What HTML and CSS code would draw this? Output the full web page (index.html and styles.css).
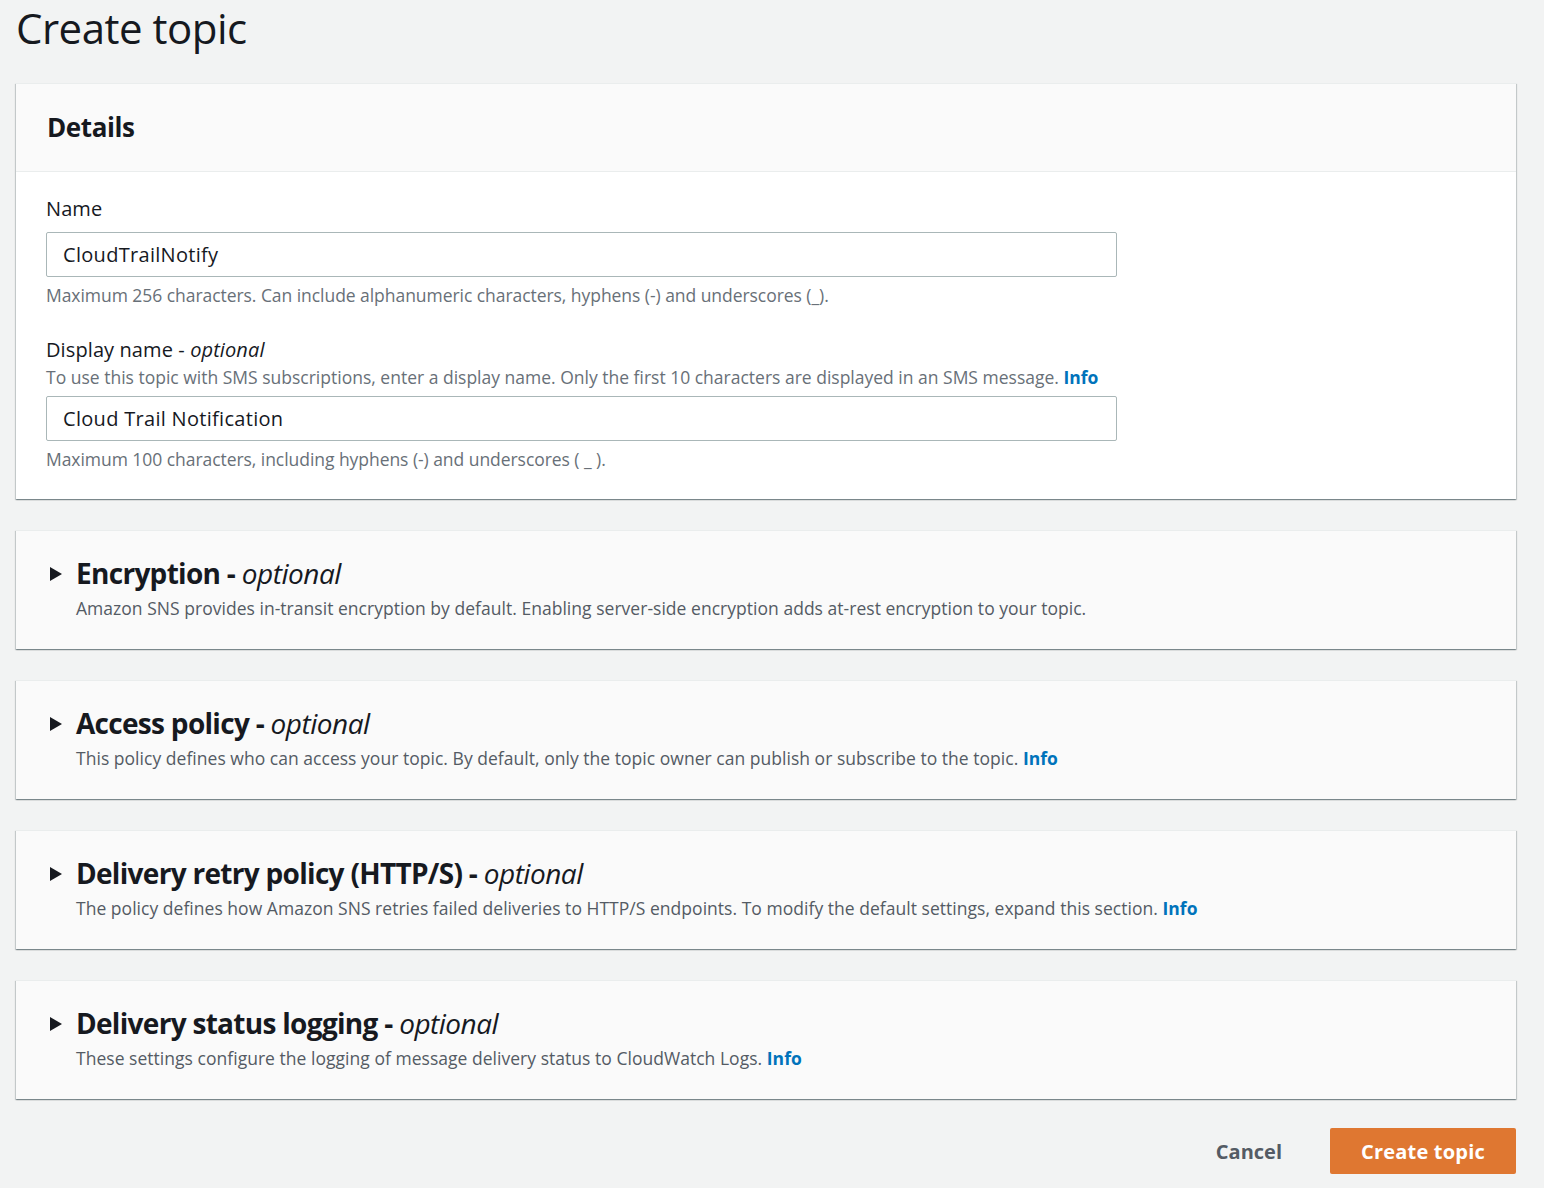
FILE: index.html
```html
<!DOCTYPE html>
<html>
<head>
<meta charset="utf-8">
<link rel="stylesheet" href="styles.css">
</head>
<body>
<div class="page">
  <h1 class="title">Create topic</h1>

  <section class="card">
    <div class="card-header"><h2>Details</h2></div>
    <div class="card-body">
      <div class="field">
        <label class="label">Name</label>
        <div class="input">CloudTrailNotify</div>
        <div class="hint">Maximum 256 characters. Can include alphanumeric characters, hyphens (-) and underscores (_).</div>
      </div>
      <div class="field second">
        <label class="label">Display name - <i>optional</i></label>
        <div class="desc">To use this topic with SMS subscriptions, enter a display name. Only the first 10 characters are displayed in an SMS message. <a class="info">Info</a></div>
        <div class="input">Cloud Trail Notification</div>
        <div class="hint">Maximum 100 characters, including hyphens (-) and underscores ( _ ).</div>
      </div>
    </div>
  </section>

  <section class="card expand">
    <div class="exp-row">
      <span class="caret"></span>
      <div>
        <h3>Encryption - <i>optional</i></h3>
        <p class="exp-desc">Amazon SNS provides in-transit encryption by default. Enabling server-side encryption adds at-rest encryption to your topic.</p>
      </div>
    </div>
  </section>

  <section class="card expand">
    <div class="exp-row">
      <span class="caret"></span>
      <div>
        <h3>Access policy - <i>optional</i></h3>
        <p class="exp-desc">This policy defines who can access your topic. By default, only the topic owner can publish or subscribe to the topic. <a class="info">Info</a></p>
      </div>
    </div>
  </section>

  <section class="card expand">
    <div class="exp-row">
      <span class="caret"></span>
      <div>
        <h3>Delivery retry policy (HTTP/S) - <i>optional</i></h3>
        <p class="exp-desc">The policy defines how Amazon SNS retries failed deliveries to HTTP/S endpoints. To modify the default settings, expand this section. <a class="info">Info</a></p>
      </div>
    </div>
  </section>

  <section class="card expand">
    <div class="exp-row">
      <span class="caret"></span>
      <div>
        <h3>Delivery status logging - <i>optional</i></h3>
        <p class="exp-desc">These settings configure the logging of message delivery status to CloudWatch Logs. <a class="info">Info</a></p>
      </div>
    </div>
  </section>

  <div class="actions">
    <button class="btn-link">Cancel</button>
    <button class="btn-primary">Create topic</button>
  </div>
</div>
</body>
</html>
```

FILE: styles.css
```css
html, body {
  margin: 0;
  padding: 0;
  background: #f2f3f3;
  font-family: "Open Sans", "Noto Sans", sans-serif;
  color: #16191f;
}

.page {
  width: 1500px;
  padding: 0 0 0 16px;
}

.title {
  margin: 0;
  padding-top: 2px;
  height: 81px;
  font-size: 42px;
  font-weight: 400;
  line-height: 52px;
  letter-spacing: -0.5px;
}

.card {
  background: #fff;
  box-shadow: 0 1px 1px 0 rgba(0, 28, 36, 0.3), 1px 1px 1px 0 rgba(0, 28, 36, 0.15), -1px 1px 1px 0 rgba(0, 28, 36, 0.15);
  border-top: 1px solid #eaeded;
  margin-bottom: 31px;
}

.card-header {
  background: #fafafa;
  border-bottom: 1px solid #eaeded;
  height: 87px;
  display: flex;
  align-items: center;
  padding-left: 31px;
}

.card-header h2 {
  margin: 0;
  font-size: 26px;
  font-weight: 700;
  letter-spacing: -0.4px;
  padding-bottom: 2px;
}

.card-body {
  padding: 20px 30px 28px 30px;
}

.field.second {
  margin-top: 26px;
}

.label {
  display: block;
  font-size: 20px;
  line-height: 34px;
  letter-spacing: 0.1px;
}

.label i {
  font-style: italic;
}

.desc {
  font-size: 17.5px;
  line-height: 20px;
  color: #687078;
  margin-bottom: 9px;
  letter-spacing: 0;
}

.input {
  width: 1053px;
  height: 43px;
  border: 1px solid #aab7b8;
  border-radius: 2px;
  padding-left: 16px;
  font-size: 20px;
  line-height: 43px;
  margin-top: 6px;
  letter-spacing: 0.3px;
}

.field.second .input {
  margin-top: 0;
}

.hint {
  margin-top: 6px;
  font-size: 17.5px;
  line-height: 24px;
  color: #687078;
  letter-spacing: -0.05px;
}

.info {
  color: #0073bb;
  font-weight: 700;
}

.expand {
  background: #fafafa;
  height: 118px;
}

.exp-row {
  display: flex;
  align-items: flex-start;
  padding: 25px 0 0 34px;
}

.caret {
  width: 0;
  height: 0;
  border-top: 7px solid transparent;
  border-bottom: 7px solid transparent;
  border-left: 12px solid #16191f;
  margin-top: 11px;
  margin-right: 14px;
}

.exp-row h3 {
  margin: 0;
  font-size: 28px;
  line-height: 34px;
  font-weight: 700;
  letter-spacing: -0.7px;
}

.exp-row h3 i {
  font-weight: 400;
  letter-spacing: -0.5px;
}

.exp-desc {
  margin: 3px 0 0 0;
  font-size: 17.5px;
  line-height: 30px;
  color: #545b64;
  letter-spacing: 0.03px;
}

.actions {
  display: flex;
  justify-content: flex-end;
  align-items: center;
  margin-top: -2px;
  gap: 34px;
}

.btn-link {
  background: none;
  border: none;
  font-family: inherit;
  font-size: 20px;
  font-weight: 700;
  color: #545b64;
  padding: 0 14px;
}

.btn-primary {
  background: #df7731;
  color: #fff;
  border: none;
  border-radius: 2px;
  font-family: inherit;
  font-size: 20px;
  font-weight: 700;
  width: 186px;
  height: 46px;
  letter-spacing: 0.2px;
}
```
